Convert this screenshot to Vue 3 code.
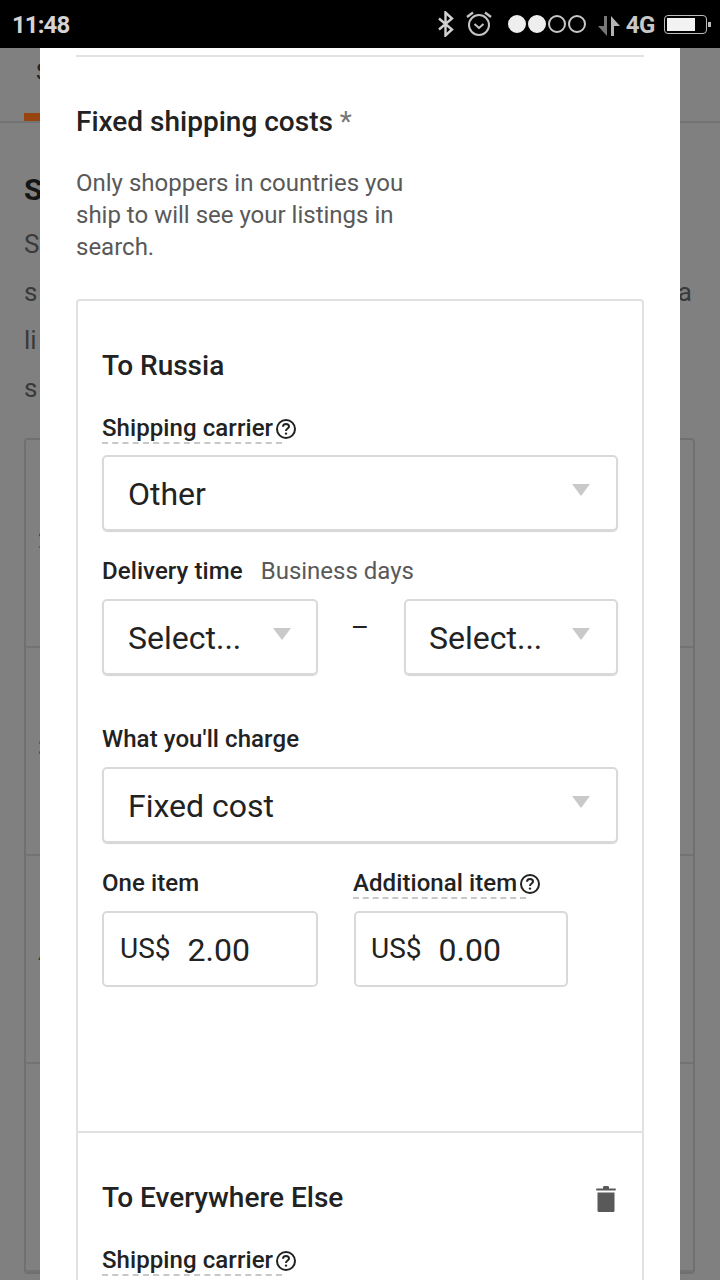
<script setup>
const bgRows = ['2', '3', '4', '5']
</script>

<template>
  <div class="phone">
    <div class="status-bar">
      <span class="time">11:48</span>
      <div class="status-icons">
        <svg class="bt" width="18" height="26" viewBox="0 0 18 26">
          <path d="M2 7.5 15 18.5 8.5 24.5V1.5L15 7.5 2 18.5" fill="none" stroke="#d2d2d2" stroke-width="2.4" />
        </svg>
        <svg class="alarm" width="28" height="26" viewBox="0 0 28 26">
          <circle cx="14" cy="14" r="10" fill="none" stroke="#c4c4c4" stroke-width="2" />
          <path d="M9.5 13 14 17 18.500 13" fill="none" stroke="#c4c4c4" stroke-width="2" />
          <path d="M2 6 8 1.500M26 6 20 1.500" fill="none" stroke="#c4c4c4" stroke-width="2.4" />
        </svg>
        <div class="signal">
          <i class="dot on"></i><i class="dot on"></i><i class="dot"></i><i class="dot"></i>
        </div>
        <svg class="data" width="22" height="20" viewBox="0 0 22 20">
          <path d="M6 0H9V20L0 10H6Z" fill="#777" />
          <path d="M13 20V0L22 10H16V20Z" fill="#b4b4b4" />
        </svg>
        <span class="net">4G</span>
        <div class="battery"><div class="battery-fill"></div></div>
        <div class="battery-tip"></div>
      </div>
    </div>

    <div class="page">
      <div class="tabs">
        <span class="tab">S</span>
        <div class="tab-mark"></div>
      </div>
      <div class="intro">
        <h2>S</h2>
        <p>S</p>
        <p class="spread"><span>s</span><span>a</span></p>
        <p>li</p>
        <p>s</p>
      </div>
      <div class="bg-card">
        <div v-for="row in bgRows" :key="row" class="bg-row">{{ row }}</div>
      </div>
    </div>

    <div class="modal">
      <div class="top-rule"></div>
      <h3 class="section-title">Fixed shipping costs <span class="req">*</span></h3>
      <p class="section-desc">Only shoppers in countries you ship to will see your listings in search.</p>

      <div class="box">
        <section class="dest first">
          <h4>To Russia</h4>
          <div class="label-row">
            <span class="label dashed">Shipping carrier</span>
            <svg class="help" width="22" height="22" viewBox="0 0 22 22">
              <circle cx="11" cy="11" r="9" fill="none" stroke="#222" stroke-width="2" />
              <path d="M8 8.800C8 7 9.300 6 11 6S14 7.100 14 8.600C14 10.600 11 10.500 11 13" fill="none" stroke="#222" stroke-width="2" />
              <circle cx="11" cy="15.600" r="1.200" fill="#222" />
            </svg>
          </div>
          <div class="select"><span>Other</span><i class="caret"></i></div>

          <div class="label-row time-label">
            <span class="label">Delivery time</span>
            <span class="hint">Business days</span>
          </div>
          <div class="range">
            <div class="select small"><span>Select...</span><i class="caret"></i></div>
            <span class="dash">–</span>
            <div class="select small right"><span>Select...</span><i class="caret"></i></div>
          </div>

          <div class="label-row charge-label"><span class="label">What you'll charge</span></div>
          <div class="select"><span>Fixed cost</span><i class="caret"></i></div>

          <div class="prices">
            <div class="price">
              <div class="label-row"><span class="label">One item</span></div>
              <div class="money"><span class="cur">US$</span><span>2.00</span></div>
            </div>
            <div class="price second">
              <div class="label-row">
                <span class="label dashed">Additional item</span>
                <svg class="help" width="22" height="22" viewBox="0 0 22 22">
                  <circle cx="11" cy="11" r="9" fill="none" stroke="#222" stroke-width="2" />
                  <path d="M8 8.800C8 7 9.300 6 11 6S14 7.100 14 8.600C14 10.600 11 10.500 11 13" fill="none" stroke="#222" stroke-width="2" />
                  <circle cx="11" cy="15.600" r="1.200" fill="#222" />
                </svg>
              </div>
              <div class="money"><span class="cur">US$</span><span>0.00</span></div>
            </div>
          </div>
        </section>

        <section class="dest last">
          <div class="dest-head">
            <h4>To Everywhere Else</h4>
            <svg class="trash" width="22" height="28" viewBox="0 0 22 28">
              <path d="M8 2.500C8 1.500 8.500 1 9.500 1H12.500C13.500 1 14 1.500 14 2.500V3.500H20C21.300 3.500 21.300 5.500 20 5.500H2C0.700 5.500 0.700 3.500 2 3.500H8Z" fill="#595959" />
              <path d="M2.500 7.500H19.500V25.500C19.500 26.500 18.800 27 18 27H4C3.200 27 2.500 26.500 2.500 25.500Z" fill="#595959" />
            </svg>
          </div>
          <div class="label-row">
            <span class="label dashed">Shipping carrier</span>
            <svg class="help" width="22" height="22" viewBox="0 0 22 22">
              <circle cx="11" cy="11" r="9" fill="none" stroke="#222" stroke-width="2" />
              <path d="M8 8.800C8 7 9.300 6 11 6S14 7.100 14 8.600C14 10.600 11 10.500 11 13" fill="none" stroke="#222" stroke-width="2" />
              <circle cx="11" cy="15.600" r="1.200" fill="#222" />
            </svg>
          </div>
        </section>
      </div>
    </div>
  </div>
</template>

<style scoped>
.phone {
  position: relative;
  width: 720px;
  height: 1280px;
  overflow: hidden;
  background: #808080;
  font-family: Roboto, "Liberation Sans", sans-serif;
  color: #222;
}

.status-bar {
  height: 48px;
  background: #000;
  display: flex;
  align-items: center;
  justify-content: space-between;
  padding: 0 9px 0 12px;
  box-sizing: border-box;
}

.time {
  margin-top: 2px;
  font-size: 24px;
  font-weight: 700;
  letter-spacing: -0.9px;
  color: #d4d4d4;
}

.status-icons {
  display: flex;
  align-items: center;
}

.alarm {
  margin-left: 10px;
}

.signal {
  display: flex;
  gap: 2px;
  margin-left: 15px;
}

.dot {
  width: 18px;
  height: 18px;
  box-sizing: border-box;
  border: 2px solid #c8c8c8;
  border-radius: 50%;
}

.dot.on {
  background: #eee;
  border-color: #eee;
}

.data {
  margin: 4px 0 0 12px;
}

.net {
  margin: 2px 0 0 6px;
  font-size: 24px;
  font-weight: 700;
  letter-spacing: -0.4px;
  color: #c8c8c8;
}

.battery {
  width: 43px;
  height: 19px;
  margin-left: 9px;
  padding: 2px;
  box-sizing: border-box;
  border: 1px solid #bbb;
  border-radius: 4px;
}

.battery-fill {
  width: 28px;
  height: 100%;
  background: #f2f2f2;
}

.battery-tip {
  width: 3px;
  height: 5px;
  margin-left: 1px;
  background: #bbb;
}

/* page behind the overlay */
.page {
  height: 1232px;
  overflow: hidden;
}

.tabs {
  height: 73px;
  border-bottom: 2px solid #737373;
  padding-left: 24px;
  display: flex;
  flex-direction: column;
  justify-content: space-between;
}

.tab {
  margin: 10px 0 0 12px;
  font-size: 24px;
  color: #222;
  line-height: 28px;
}

.tab-mark {
  width: 120px;
  height: 8px;
  background: #984410;
}

.intro {
  padding: 0 24px;
  color: #3a3a3a;
}

.intro h2 {
  margin: 51px 0 0;
  font-size: 30px;
  font-weight: 700;
  line-height: 32px;
  color: #151515;
}

.intro p {
  margin: 0;
  font-size: 26px;
  line-height: 48px;
}

.intro h2 + p {
  margin-top: 14px;
}

.spread {
  display: flex;
  justify-content: space-between;
  padding-right: 4px;
}

.bg-card {
  margin: 26px 25px 0 24px;
  border: 2px solid #707070;
  border-radius: 4px;
}

.bg-row {
  height: 208px;
  border-bottom: 2px solid #737373;
  padding: 86px 0 0 12px;
  box-sizing: border-box;
  font-size: 24px;
  color: #3a3a3a;
}

/* modal */
.modal {
  position: absolute;
  top: 48px;
  left: 40px;
  width: 640px;
  height: 1232px;
  box-sizing: border-box;
  padding: 0 36px;
  background: #fff;
  overflow: hidden;
}

.top-rule {
  height: 2px;
  margin-top: 7px;
  background: #e2e2e2;
}

.section-title {
  margin: 49px 0 0;
  font-size: 28px;
  font-weight: 500;
  line-height: 32px;
  color: #222;
}

.req {
  font-weight: 400;
  color: #777;
}

.section-desc {
  width: 340px;
  margin: 29px 0 0;
  font-size: 24px;
  line-height: 32px;
  color: #595959;
}

.box {
  margin-top: 36px;
  border: 2px solid #e1e1e1;
  border-radius: 4px 4px 0 0;
}

.dest {
  padding: 49px 24px 0;
}

.dest.first {
  height: 832px;
  box-sizing: border-box;
  border-bottom: 2px solid #e1e1e1;
}

/* runs on below the fold */
.dest.last {
  height: 300px;
}

h4 {
  margin: 0;
  font-size: 28px;
  font-weight: 500;
  line-height: 32px;
  color: #222;
}

.dest-head {
  display: flex;
  justify-content: space-between;
  align-items: center;
}

.trash {
  margin: 1px 1px 0 0;
}

.label-row {
  display: flex;
  align-items: center;
  height: 32px;
  margin-top: 30px;
}

.label {
  font-size: 24px;
  font-weight: 500;
  letter-spacing: 0.08px;
  line-height: 28px;
  color: #222;
}

.dashed {
  position: relative;
}

.dashed::after {
  content: '';
  position: absolute;
  left: 0;
  right: -9px;
  bottom: -2px;
  border-bottom: 2px dashed #c8c8c8;
}

.help {
  margin: 2px 0 0 2px;
}

.hint {
  margin-left: 18px;
  font-size: 24px;
  color: #595959;
}

.select {
  display: flex;
  align-items: center;
  justify-content: space-between;
  height: 76px;
  margin-top: 11px;
  padding: 2px 26px 0 24px;
  box-sizing: border-box;
  border: 2px solid #d9d9d9;
  border-radius: 5px;
  box-shadow: 0 1px 1px #d4d4d4;
  font-size: 32px;
  color: #222;
}

.caret {
  width: 0;
  height: 0;
  margin-top: -8px;
  border-left: 9px solid transparent;
  border-right: 9px solid transparent;
  border-top: 12px solid #c9c9c9;
}

.time-label {
  margin-top: 24px;
}

.range {
  display: flex;
  align-items: flex-start;
  margin-top: 12px;
}

.range .select {
  margin-top: 0;
}

.select.small {
  width: 216px;
  padding-right: 25px;
}

.select.right {
  width: 214px;
  padding-left: 23px;
  padding-right: 26px;
}

.dash {
  flex: 1;
  padding-right: 2px;
  text-align: center;
  font-size: 28px;
  line-height: 58px;
  color: #222;
}

.charge-label {
  margin-top: 48px;
}

.charge-label + .select {
  margin-top: 12px;
}

.prices {
  display: flex;
  margin-top: 24px;
}

.price {
  width: 216px;
}

.price.second {
  width: 214px;
  margin-left: 36px;
}

.price.second .label {
  margin-left: -1px;
}

.price.second .money {
  padding-left: 15px;
}

.price .label-row {
  margin-top: 0;
}

.money {
  display: flex;
  align-items: center;
  height: 76px;
  margin-top: 12px;
  padding: 2px 0 0 16px;
  box-sizing: border-box;
  border: 2px solid #d9d9d9;
  border-radius: 5px;
  font-size: 32px;
  color: #222;
}

.cur {
  margin: -4px 17px 0 0;
  font-size: 28px;
}
</style>

<style>
body {
  background: #808080;
}
</style>
